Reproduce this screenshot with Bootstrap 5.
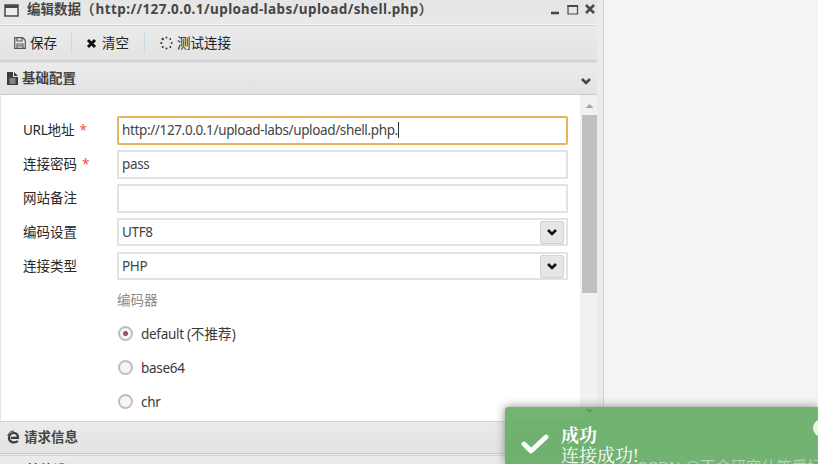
<!DOCTYPE html>
<html lang="zh-CN">
<head>
<meta charset="utf-8">
<title>编辑数据</title>
<link href="https://cdn.jsdelivr.net/npm/bootstrap@5.3.0/dist/css/bootstrap.min.css" rel="stylesheet">
<style>
body{width:818px;height:464px;background:#f4f4f4;color:#333;font:13.5px/20px "Noto Sans","Noto Sans CJK SC",sans-serif}
svg{display:block;flex:none}
.win{width:604px;height:464px;background:#ebebeb;border-right:1px solid #d0d0d0}
.inner{width:597px}
.titlebar{height:25px;padding:0 1px 7px 4px;background:linear-gradient(#e5e5e5,#e9e9e9);border-bottom:1px solid #f7f7f7}
.titlebar .caption-text{font-weight:600;color:#464646;margin-left:8px;line-height:18px}
.titlebar .addr{font-weight:700;letter-spacing:.42px;margin-left:1px}
.win-icon{margin-top:3px}
.tools{height:36px;border-top:1px solid #d4d4d4;border-bottom:1px solid #cfcfcf;background:linear-gradient(#ebebeb,#e3e3e3);padding-left:14px;color:#222}
.tool-sep{width:1px;height:22px;background:#c9d9e2}
#save{margin:0 14px 0 4px}
#xico{margin-left:14px}
#clear{margin:0 15px 0 5px}
#spin{margin-left:15px}
.section-head{background:linear-gradient(#ebebeb,#e2e2e2);border-top:1px solid #d3d3d3;border-bottom:1px solid #cacaca;font-weight:600;color:#454545;padding-left:7px}
#base{height:34px;border-top-width:2px;border-top-color:#d9d9d9}
#base span{padding-bottom:1px}
#base #fold{margin:4px 6px 0 auto}
#request{height:33px;padding-bottom:1px}
#other{height:33px;margin-top:1px;padding-bottom:3px}
.head-text{margin-left:4px}
.form-area{height:326px;background:#fff;border-left:1px solid #e4e4e4}
.fields{padding:21px 0 0 22px}
.field-row{height:34.05px}
.field-label{width:94px;color:#282828;padding-top:4px}
.latin{letter-spacing:-.3px}
.req{color:#f34b4b;margin-left:5px}
.entry{width:451px;height:29px;border:2px solid #e3e3e3;border-radius:1px;padding:0 2px 1px 3px;background:#fff;color:#444;letter-spacing:-.36px}
.entry.active{border-color:#e8b45b;border-radius:2px}
.sel{height:28px;padding-bottom:0}
.caret-line{width:1px;height:16px;background:#333}
.drop{width:24px;height:23px;background:#e6e6e6;border:1px solid #d2d2d2;border-radius:2px}
.radio-list{padding-left:94px;color:#3a3a3a}
.hint{color:#8b8b8b;padding-top:4px}
.ring{width:15px;height:15px;margin:6px 0 0 1px;border:2px solid #c2bcc0;border-radius:50%;background:#f5f5f5}
.ring i{width:5px;height:5px;border-radius:50%;background:#96505a}
.choice{margin:4px 0 0 8px;letter-spacing:-.3px}
.cjk{letter-spacing:.2px}
.scroller{width:17px;background:#f1f1f1}
.thumb{height:178px;width:15px;background:#c0c0c0}
.toast-box{position:absolute;left:505px;top:407px;width:313px;height:57px;background:rgba(94,169,94,.87);border-radius:3px 0 0 0;box-shadow:0 0 10px #888;color:#fff;font-family:"Noto Serif CJK SC","Liberation Serif","Noto Sans CJK SC",serif;font-size:18px;line-height:20px}
.toast-dot{position:absolute;right:-13px;top:12px;width:18px;height:18px;border-radius:50%;background:#e9f3e9}
#tick{margin:24px 0 0 16px}
#msg{margin:17px 0 0 10px}
.stamp{position:absolute;left:637px;top:457px;color:#b9d0b9;font-size:15.3px;line-height:20px;white-space:nowrap;font-family:"Liberation Sans","Noto Sans CJK SC",sans-serif}
</style>
<script src="https://cdn.jsdelivr.net/npm/bootstrap@5.3.0/dist/js/bootstrap.bundle.min.js"></script>
</head>
<body class="overflow-hidden position-relative">
<main class="win overflow-hidden">
<div class="inner">
 <header class="titlebar d-flex align-items-center">
  <svg class="win-icon" width="15" height="13"><path d="M1 1h13v11H1z" fill="#eee" stroke="#484848" stroke-width="1.5"/><path d="M1 1h13v3H1z" fill="#484848"/></svg>
  <span class="caption-text text-nowrap">编辑数据（<span class="addr">http://127.0.0.1/upload-labs/upload/shell.php</span>）</span>
  <svg class="ms-auto" width="46" height="14"><path d="M1 11h8" stroke="#484848" stroke-width="2.6"/><path d="M18 4h9.500v8H18z" fill="none" stroke="#484848" stroke-width="1.2"/><path d="M17.400 4h10.700" stroke="#484848" stroke-width="2"/><path d="M36 3l8 8m0-8l-8 8" stroke="#484848" stroke-width="2.500"/></svg>
 </header>
 <nav class="tools d-flex align-items-center">
  <svg width="12" height="12"><path d="M.7.7h8L11.300 3.300v8H.7zM3 1v3h5V1M3 11V7h6v4M4 9h4" fill="none" stroke="#555" stroke-width="1.2"/></svg>
  <span id="save">保存</span><span class="tool-sep"></span>
  <svg id="xico" width="11" height="11"><path d="M2 2l7 7m0-7L2 9" stroke="#111" stroke-width="3"/></svg>
  <span id="clear">清空</span><span class="tool-sep"></span>
  <svg id="spin" width="13" height="14"><g fill="#333"><circle cx="6.500" cy="1.500" r=".9"/><circle cx="10.300" cy="3" r=".9"/><circle cx="11.700" cy="7" r=".9"/><circle cx="10.300" cy="11" r="1"/><circle cx="6.500" cy="12.500" r="1"/><circle cx="2.700" cy="11" r="1.1"/><circle cx="1.300" cy="7" r="1.1"/><circle cx="2.700" cy="3" r="1.2"/></g></svg>
  <span class="ms-1">测试连接</span>
 </nav>
 <div class="section-head d-flex align-items-center" id="base">
  <svg width="11" height="13"><path fill="#3c3c3c" d="M0 0h6v5h5v8H0zM7 0l4 4H7z"/><path d="M2.500 7h6M2.500 9h6M2.500 11h6" stroke="#ddd" stroke-width=".9"/></svg>
  <span class="ms-1">基础配置</span>
  <svg id="fold" width="10" height="8"><path d="M1 2l4 4 4-4" fill="none" stroke="#444" stroke-width="2.500"/></svg>
 </div>
 <section class="form-area d-flex justify-content-between">
  <div class="fields">
   <div class="field-row d-flex"><span class="field-label"><span class="latin">URL</span>地址<span class="req">*</span></span><div class="entry active d-flex align-items-center"><span>http://127.0.0.1/upload-labs/upload/shell.php.</span><span class="caret-line"></span></div></div>
   <div class="field-row d-flex"><span class="field-label">连接密码<span class="req">*</span></span><div class="entry d-flex align-items-center">pass</div></div>
   <div class="field-row d-flex"><span class="field-label">网站备注</span><div class="entry"></div></div>
   <div class="field-row d-flex"><span class="field-label">编码设置</span><div class="entry sel d-flex align-items-center justify-content-between">UTF8<span class="drop d-flex align-items-center justify-content-center"><svg width="10" height="8"><path d="M1 2l4 4 4-4" fill="none" stroke="#111" stroke-width="2.600"/></svg></span></div></div>
   <div class="field-row d-flex"><span class="field-label">连接类型</span><div class="entry sel d-flex align-items-center justify-content-between">PHP<span class="drop d-flex align-items-center justify-content-center"><svg width="10" height="8"><path d="M1 2l4 4 4-4" fill="none" stroke="#111" stroke-width="2.600"/></svg></span></div></div>
   <div class="radio-list">
    <div class="field-row hint">编码器</div>
    <div class="field-row d-flex"><span class="ring d-flex align-items-center justify-content-center"><i></i></span><span class="choice">default (<span class="cjk">不推荐</span>)</span></div>
    <div class="field-row d-flex"><span class="ring"></span><span class="choice">base64</span></div>
    <div class="field-row d-flex"><span class="ring"></span><span class="choice">chr</span></div>
   </div>
  </div>
  <div class="scroller d-flex flex-column align-items-end">
   <svg width="15" height="20"><path d="M3.500 13l4-4 4 4z" fill="#a3a3a3"/></svg>
   <div class="thumb"></div>
   <svg class="mt-auto" width="15" height="16"><path d="M3.500 4l4 4 4-4z" fill="#555"/></svg>
  </div>
 </section>
 <div class="section-head d-flex align-items-center" id="request">
  <svg width="13" height="14"><path d="M4 7.800h7C11 4.500 9 3 6.500 3 3.500 3 2 5.500 2 8c0 4.500 5.500 5.500 9 3.200" fill="none" stroke="#3c3c3c" stroke-width="2.200"/><path d="M.8 6C1.500 2.500 4 1 7 1" fill="none" stroke="#3c3c3c" stroke-width="1"/></svg><span class="head-text">请求信息</span>
 </div>
 <div class="section-head d-flex align-items-center" id="other">
  <svg width="15" height="14"><circle cx="6" cy="8" r="3.500" fill="none" stroke="#444" stroke-width="2.500"/><path d="M10 1v4M8 3h5" stroke="#444" stroke-width="1.500"/></svg><span class="head-text">其他设置</span>
 </div>
</div>
</main>
<aside class="toast-box">
 <div class="d-flex">
  <svg width="30" height="26" id="tick"><path d="M3 13l7 7L25 6" fill="none" stroke="#fff" stroke-width="4.800" stroke-linecap="round" stroke-linejoin="round"/></svg>
  <div id="msg"><b>成功</b><br>连接成功!</div>
 </div>
 <span class="toast-dot"></span>
</aside>
<div class="stamp">CSDN @不会研究什策爱坛</div>
</body>
</html>
